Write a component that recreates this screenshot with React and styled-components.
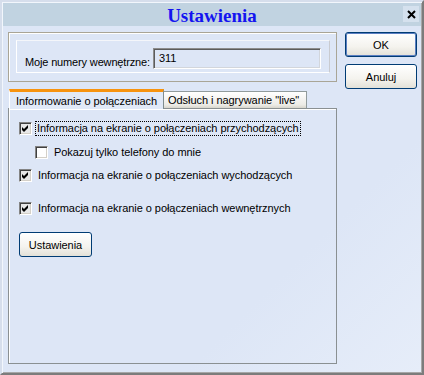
import React from "react";
import styled, { createGlobalStyle, css } from "styled-components";

const GlobalStyle = createGlobalStyle`
  html, body { margin: 0; padding: 0; background: #dde6f6; }
  body {
    font-family: "Liberation Sans", Arial, sans-serif;
    font-size: 11px;
    letter-spacing: -0.05px;
    color: #000;
  }
  * { box-sizing: border-box; }
`;

const Window = styled.div`
  width: 424px;
  height: 375px;
  display: flex;
  flex-direction: column;
  background: linear-gradient(135deg, #dde6f6 0%, #dde6f6 70%, #e6edf9 100%);
  border: 2px solid;
  border-color: #d6deec #7c7c7c #7c7c7c #d6deec;
  box-shadow: inset 1px 1px 0 #f2f6fc, inset -1px -1px 0 #a7a7a7;
`;

const TitleBar = styled.div`
  position: relative;
  height: 23px;
  margin: 1px 1px 0 1px;
  background: #c1d3e1;
  display: flex;
  align-items: center;
  justify-content: center;
`;

const Title = styled.span`
  font-family: "Liberation Serif", "Times New Roman", serif;
  font-weight: bold;
  font-size: 19px;
  letter-spacing: 0;
  color: #1414f0;
  line-height: 1;
  margin-top: 1px;
`;

const CloseButton = styled.div`
  position: absolute;
  right: 2px;
  top: 3px;
  width: 16px;
  height: 16px;
  background: #d5e1ee;
  display: flex;
  align-items: center;
  justify-content: center;
`;

const Body = styled.div`
  flex: 1;
  display: flex;
  gap: 8px;
  padding: 6px 5px 9px 6px;
`;

const LeftColumn = styled.div`
  width: 329px;
  display: flex;
  flex-direction: column;
`;

const RightColumn = styled.div`
  display: flex;
  flex-direction: column;
  gap: 7px;
`;

const GroupOuter = styled.div`
  height: 50px;
  border: 1px solid #a9a596;
  box-shadow: inset 1px 1px 0 #ffffff;
  padding: 7px 6px 8px 7px;
`;

const GroupInner = styled.div`
  height: 33px;
  border: 1px solid #ffffff;
  border-right-color: #c9cbd0;
  border-top-color: #f4f6fa;
  display: flex;
  align-items: flex-end;
  padding: 0 0 2px 8px;
  gap: 3px;
`;

const FieldLabel = styled.span`
  line-height: 14px;
  padding-bottom: 1px;
  white-space: nowrap;
  letter-spacing: -0.15px;
`;

const ReadOnlyField = styled.div`
  width: 168px;
  height: 21px;
  margin-bottom: 1px;
  border: 1px solid;
  border-color: #8c8c8c #ffffff #ffffff #8c8c8c;
  box-shadow: inset 1px 1px 0 #5c5c5c, inset -1px -1px 0 #d2d6dc;
  padding: 2px 5px;
  line-height: 14px;
`;

const TabStrip = styled.div`
  margin-top: 7px;
  height: 19px;
  display: flex;
  align-items: flex-end;
  padding-left: 1px;
`;

const Tab = styled.div`
  height: ${(p) => (p.$active ? "20px" : "17px")};
  display: flex;
  align-items: center;
  white-space: nowrap;
  position: relative;
  ${(p) =>
    p.$active
      ? css`
          width: 155px;
          padding: 1px 0 0 6px;
          background: #e1e9f7;
          border-top: 3px solid #f7930e;
          border-left: 1px solid #ffffff;
          border-right: 1px solid #7f8c8f;
          margin-bottom: -1px;
          z-index: 1;
        `
      : css`
          width: 143px;
          padding: 0 0 0 4px;
          background: linear-gradient(#ffffff, #ecebe6 80%, #d8d6cc);
          border: 1px solid #919b9c;
          border-bottom: none;
          border-left: none;
        `}
`;

const Panel = styled.div`
  flex: 1;
  border: 1px solid #8a9092;
  box-shadow: inset 1px 1px 0 #ffffff;
  padding: 12px 10px;
  display: flex;
  flex-direction: column;
  align-items: flex-start;
`;

const CheckRow = styled.label`
  display: flex;
  align-items: center;
  height: 15px;
  margin-left: ${(p) => p.$indent || 0}px;
  margin-top: ${(p) => p.$top || 0}px;
`;

const Box = styled.span`
  width: 13px;
  height: 13px;
  flex: none;
  border: 1px solid;
  border-color: #848484 #ffffff #ffffff #848484;
  box-shadow: inset 1px 1px 0 #404040, inset -1px -1px 0 #d4d0c8;
  background: ${(p) => (p.$checked ? "#e8e8e8" : "#ffffff")};
  display: flex;
  align-items: center;
  justify-content: center;
`;

const CheckText = styled.span`
  margin-left: ${(p) => (p.$focused ? "3px" : "5px")};
  padding: 0 ${(p) => (p.$focused ? "1px" : "0")};
  line-height: 13px;
  border: 1px dotted ${(p) => (p.$focused ? "#000" : "transparent")};
  white-space: nowrap;
`;

const PushButton = styled.button`
  font: inherit;
  font-size: 11px;
  letter-spacing: -0.05px;
  color: #000;
  width: ${(p) => p.$w || 72}px;
  height: 25px;
  border: 1px solid #003c74;
  border-radius: 3px;
  background: linear-gradient(#ffffff, #f4f3ee 60%, #e3e1d8);
  padding: 0;
  margin-top: ${(p) => p.$top || 0}px;
  ${(p) =>
    p.$default &&
    css`
      box-shadow: inset 0 0 0 1px #5a7ec2;
    `}
`;

function CheckMark() {
  return (
    <svg width="7" height="7" viewBox="0 0 7 7">
      <path d="M0 2 L2 4 L6 0 L6 3 L2 7 L0 5 Z" fill="#000" />
    </svg>
  );
}

function Check({ checked, focused, indent, top, children }) {
  return (
    <CheckRow $indent={indent} $top={top}>
      <Box $checked={checked}>{checked && <CheckMark />}</Box>
      <CheckText $focused={focused}>{children}</CheckText>
    </CheckRow>
  );
}

export default function App() {
  return (
    <>
      <GlobalStyle />
      <Window>
        <TitleBar>
          <Title>Ustawienia</Title>
          <CloseButton>
            <svg width="9" height="9" viewBox="0 0 9 9">
              <path d="M1 1 L8 8 M8 1 L1 8" stroke="#000" strokeWidth="2" />
            </svg>
          </CloseButton>
        </TitleBar>
        <Body>
          <LeftColumn>
            <GroupOuter>
              <GroupInner>
                <FieldLabel>Moje numery wewnętrzne:</FieldLabel>
                <ReadOnlyField>311</ReadOnlyField>
              </GroupInner>
            </GroupOuter>
            <TabStrip>
              <Tab $active>Informowanie o połączeniach</Tab>
              <Tab>Odsłuch i nagrywanie "live"</Tab>
            </TabStrip>
            <Panel>
              <Check checked focused>
                Informacja na ekranie o połączeniach przychodzących
              </Check>
              <Check indent={16} top={9}>
                Pokazuj tylko telefony do mnie
              </Check>
              <Check checked top={8}>
                Informacja na ekranie o połączeniach wychodzących
              </Check>
              <Check checked top={18}>
                Informacja na ekranie o połączeniach wewnętrznych
              </Check>
              <PushButton $w={73} $top={16}>
                Ustawienia
              </PushButton>
            </Panel>
          </LeftColumn>
          <RightColumn>
            <PushButton $default>OK</PushButton>
            <PushButton>Anuluj</PushButton>
          </RightColumn>
        </Body>
      </Window>
    </>
  );
}
